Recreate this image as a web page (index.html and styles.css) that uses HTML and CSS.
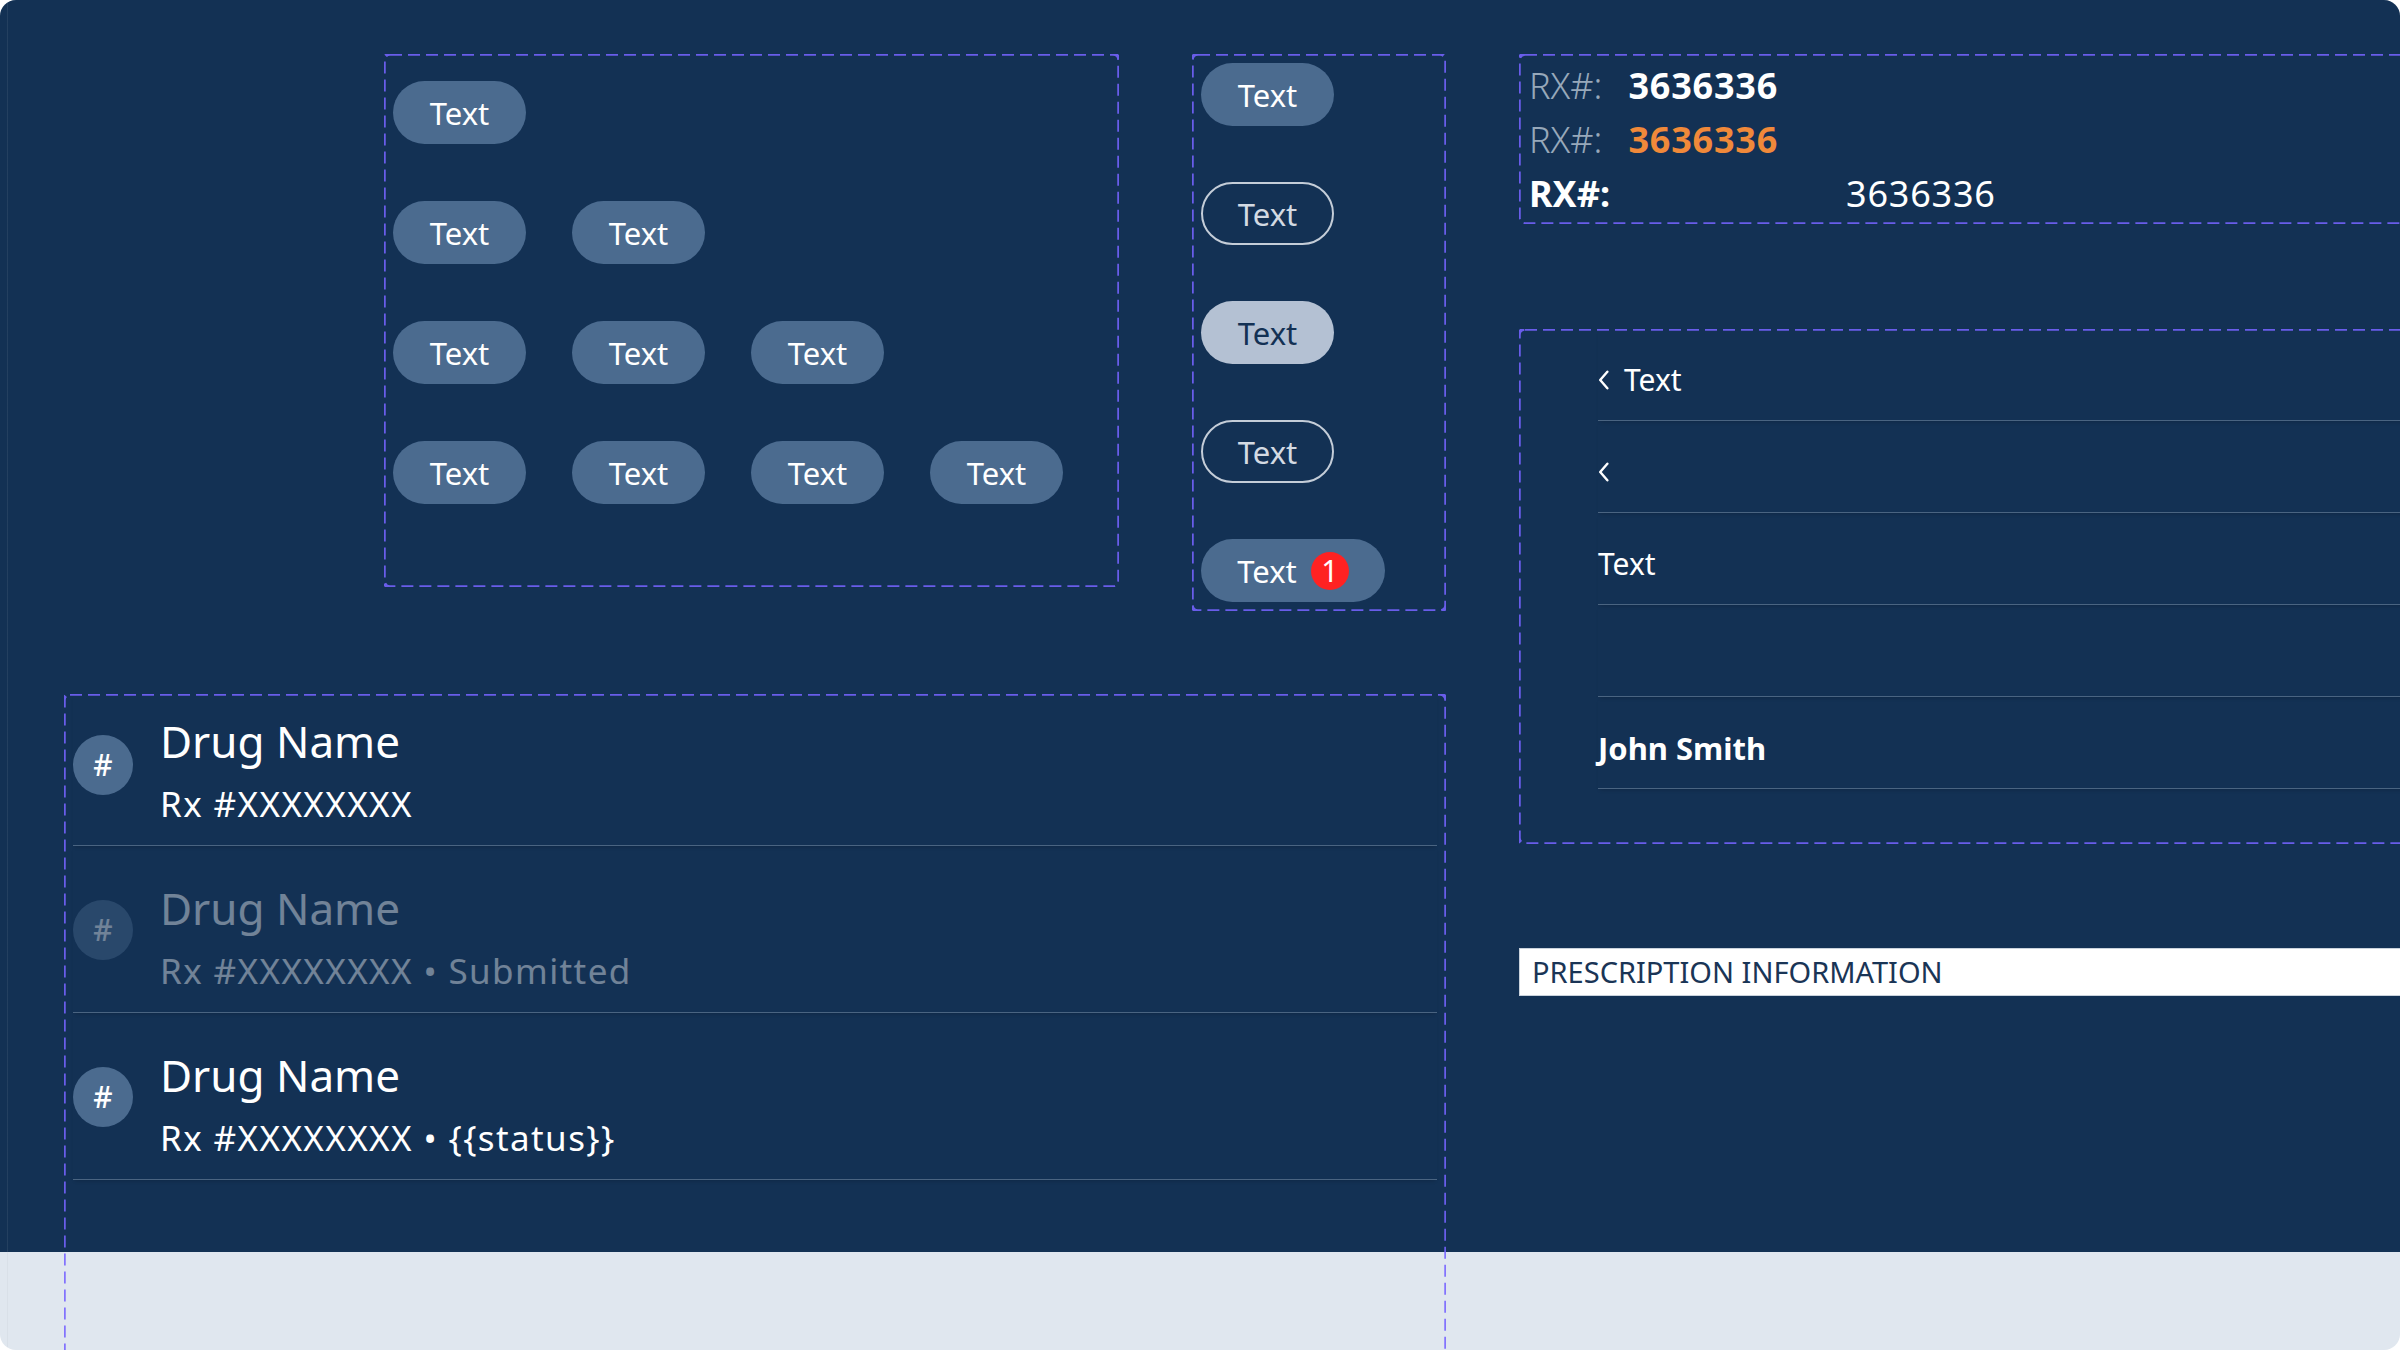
FILE: index.html
```html
<!DOCTYPE html>
<html lang="en">
<head>
    <meta charset="UTF-8">
    <meta name="viewport" content="width=device-width, initial-scale=1.0">
    <title>Pharmacy components</title>
    <link rel="stylesheet" href="styles.css">
</head>
<body>
    <div class="screen">
        <div class="canvas">
            <div class="left">
                <div class="top-row">
                    <div class="frame chip-grid">
                        <svg class="dash"><rect width="100%" height="100%" rx="6"/></svg>
                        <div class="chip-row">
                            <span class="chip">Text</span>
                        </div>
                        <div class="chip-row">
                            <span class="chip">Text</span>
                            <span class="chip">Text</span>
                        </div>
                        <div class="chip-row">
                            <span class="chip">Text</span>
                            <span class="chip">Text</span>
                            <span class="chip">Text</span>
                        </div>
                        <div class="chip-row">
                            <span class="chip">Text</span>
                            <span class="chip">Text</span>
                            <span class="chip">Text</span>
                            <span class="chip">Text</span>
                        </div>
                    </div>
                    <div class="frame chip-states">
                        <svg class="dash"><rect width="100%" height="100%" rx="6"/></svg>
                        <span class="chip">Text</span>
                        <span class="chip chip-outline">Text</span>
                        <span class="chip chip-light">Text</span>
                        <span class="chip chip-outline">Text</span>
                        <span class="chip chip-badge">Text <span class="badge">1</span></span>
                    </div>
                </div>

                <div class="frame drugs">
                    <svg class="dash"><rect width="100%" height="100%" rx="6"/></svg>
                    <div class="drug">
                        <div class="drug-icon">#</div>
                        <div class="drug-text">
                            <div class="drug-name">Drug Name</div>
                            <div class="drug-rx">Rx #XXXXXXXX</div>
                        </div>
                    </div>
                    <div class="drug drug-muted">
                        <div class="drug-icon">#</div>
                        <div class="drug-text">
                            <div class="drug-name">Drug Name</div>
                            <div class="drug-rx">Rx #XXXXXXXX &bull; Submitted</div>
                        </div>
                    </div>
                    <div class="drug">
                        <div class="drug-icon">#</div>
                        <div class="drug-text">
                            <div class="drug-name">Drug Name</div>
                            <div class="drug-rx">Rx #XXXXXXXX &bull; {{status}}</div>
                        </div>
                    </div>
                </div>
            </div>

            <div class="right">
                <div class="frame rx-box">
                    <svg class="dash"><rect width="100%" height="100%" rx="6"/></svg>
                    <div class="rx-line">
                        <span class="rx-label">RX#:</span>
                        <span class="rx-value">3636336</span>
                    </div>
                    <div class="rx-line">
                        <span class="rx-label">RX#:</span>
                        <span class="rx-value rx-orange">3636336</span>
                    </div>
                    <div class="rx-line rx-wide">
                        <span class="rx-label">RX#:</span>
                        <span class="rx-value">3636336</span>
                    </div>
                </div>

                <div class="frame nav-box">
                    <svg class="dash"><rect width="100%" height="100%" rx="6"/></svg>
                    <ul class="nav-list">
                        <li class="nav-item">
                            <svg class="chevron" viewBox="0 0 10 18"><path d="M8.5 1.5 L2 9 L8.5 16.5"/></svg>
                            <span>Text</span>
                        </li>
                        <li class="nav-item">
                            <svg class="chevron" viewBox="0 0 10 18"><path d="M8.5 1.5 L2 9 L8.5 16.5"/></svg>
                        </li>
                        <li class="nav-item">Text</li>
                        <li class="nav-item"></li>
                        <li class="nav-item nav-strong">John Smith</li>
                    </ul>
                </div>

                <div class="section-bar">PRESCRIPTION INFORMATION</div>
            </div>
        </div>
    </div>
</body>
</html>
```

FILE: styles.css
```css
body {
    margin: 0;
    background: #ffffff;
    font-family: "Noto Sans", "Open Sans", sans-serif;
}

.screen {
    width: 2400px;
    height: 1350px;
    border-radius: 16px;
    overflow: hidden;
    background:
        linear-gradient(90deg, transparent 7px, rgba(0, 0, 0, 0.03) 7px, rgba(0, 0, 0, 0.03) 8px, transparent 8px),
        #e0e7ef;
}

.canvas {
    display: flex;
    align-items: flex-start;
    gap: 73px;
    height: 1252px;
    box-sizing: border-box;
    padding: 54px 0 0 64px;
    background:
        linear-gradient(90deg, transparent 7px, rgba(255, 255, 255, 0.07) 7px, rgba(255, 255, 255, 0.07) 8px, transparent 8px),
        #133154;
    color: #ffffff;
}

/* dashed component frames */
.frame {
    position: relative;
    box-sizing: border-box;
}

.dash {
    position: absolute;
    top: 0;
    left: 0;
    width: 100%;
    height: 100%;
    overflow: hidden;
    pointer-events: none;
}

.dash rect {
    fill: none;
    stroke: #7563ff;
    stroke-width: 3.5;
    stroke-dasharray: 12 6;
    opacity: 0.88;
}

.left {
    width: 1382px;
    flex-shrink: 0;
}

.top-row {
    display: flex;
    align-items: flex-start;
    gap: 73px;
    padding-left: 320px;
}

/* chips */
.chip-grid {
    width: 735px;
    height: 533px;
    padding: 27px 9px;
    display: flex;
    flex-direction: column;
    gap: 57px;
}

.chip-row {
    display: flex;
    gap: 46px;
}

.chip {
    display: inline-flex;
    align-items: center;
    justify-content: center;
    box-sizing: border-box;
    width: 133px;
    height: 63px;
    border-radius: 32px;
    background: #4b6b8f;
    color: #ffffff;
    font-size: 31px;
}

.chip-states {
    width: 254px;
    padding: 9px;
    display: flex;
    flex-direction: column;
    align-items: flex-start;
    gap: 56px;
}

.chip-outline {
    background: transparent;
    border: 2px solid #c4cdd8;
    color: #d3dae3;
}

.chip-light {
    background: #b4c1d3;
    color: #133154;
}

.chip-badge {
    width: 184px;
    gap: 14px;
}

.badge {
    width: 38px;
    height: 38px;
    border-radius: 50%;
    background: #ff2222;
    color: #ffffff;
    font-size: 30px;
    line-height: 38px;
    text-align: center;
}

/* drug list */
.drugs {
    margin-top: 83px;
    height: 720px;
    padding: 0 9px;
}

.drug {
    display: flex;
    align-items: flex-start;
    gap: 27px;
    box-sizing: border-box;
    height: 167px;
    padding-top: 34px;
    border-bottom: 1px solid #4a6481;
    box-shadow: 0 3px 4px -2px rgba(0, 0, 0, 0.18);
}

.drug:first-of-type {
    height: 152px;
    padding-top: 19px;
}

.drug:first-of-type .drug-icon {
    margin-top: 22px;
}

.drug-icon {
    flex-shrink: 0;
    width: 60px;
    height: 60px;
    margin-top: 20px;
    border-radius: 50%;
    background: #4b6b8f;
    font-size: 30px;
    font-weight: 500;
    line-height: 60px;
    text-align: center;
}

.drug-name {
    font-size: 44px;
    line-height: 56px;
}

.drug-rx {
    margin-top: 7px;
    font-size: 35px;
    line-height: 56px;
    letter-spacing: 1.4px;
}

.drug-muted .drug-icon,
.drug-muted .drug-text {
    opacity: 0.4;
}

/* right column */
.right {
    width: 1000px;
    flex-shrink: 0;
}

.rx-box {
    height: 170px;
    padding: 5px 10px 0;
}

.rx-line {
    display: flex;
    gap: 26px;
    font-size: 36px;
    line-height: 54px;
}

.rx-label {
    color: #97a8ba;
    font-weight: 300;
}

.rx-value {
    font-weight: 700;
    letter-spacing: 0.8px;
}

.rx-orange {
    color: #f0893a;
}

.rx-wide .rx-label {
    min-width: 291px;
    color: #ffffff;
    font-weight: 700;
}

.rx-wide .rx-value {
    font-weight: 400;
}

.nav-box {
    margin-top: 105px;
    height: 515px;
}

.nav-list {
    list-style: none;
    margin: 0 0 0 79px;
    padding: 0;
}

.nav-item {
    display: flex;
    align-items: center;
    gap: 15px;
    box-sizing: border-box;
    height: 92px;
    padding-top: 10px;
    border-bottom: 1px solid #4a6481;
    box-shadow: 0 3px 4px -2px rgba(0, 0, 0, 0.18);
    font-size: 30px;
}

.nav-strong {
    font-size: 31px;
    font-weight: 700;
}

.chevron {
    width: 11px;
    height: 20px;
}

.chevron path {
    fill: none;
    stroke: #ffffff;
    stroke-width: 2.2;
    stroke-linecap: round;
    stroke-linejoin: round;
}

.section-bar {
    margin-top: 104px;
    height: 48px;
    box-sizing: border-box;
    padding-left: 12px;
    border: 1px solid #c9d2dc;
    background: #ffffff;
    color: #1a3556;
    font-size: 29px;
    line-height: 46px;
}
```
